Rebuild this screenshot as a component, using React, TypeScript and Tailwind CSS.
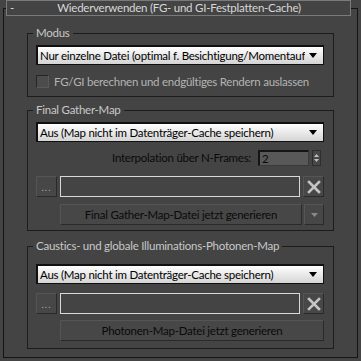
const font = { fontFamily: 'Lato, "Noto Sans", sans-serif' };

const txt = "text-[11.5px] tracking-[-0.25px]";

function Group({ label, className, children }: { label: string; className?: string; children: React.ReactNode }) {
  return (
    <div className={`relative ml-[23px] w-[307px] border border-[#1c1c1c] px-[8px] ${className ?? ""}`}>
      <span className={`absolute -top-[9px] left-[5px] bg-[#444444] px-[3px] ${txt} leading-[16px] whitespace-nowrap text-[#c8c8c8]`}>
        {label}
      </span>
      {children}
    </div>
  );
}

function Dropdown({ text }: { text: string }) {
  return (
    <div className="flex h-[20px] w-[288px] items-center border border-[#101010] border-t-2 border-l-2 bg-gradient-to-b from-[#ffffff] to-[#d4d4d4] pl-[2px] pr-[6px]">
      <span className={`flex-1 overflow-hidden whitespace-nowrap ${txt} leading-[16px] text-black`}>{text}</span>
      <svg width="8" height="5" viewBox="0 0 8 5" className="ml-[4px] shrink-0">
        <path d="M0 0H8L4 5Z" fill="#000" />
      </svg>
    </div>
  );
}

function FileRow() {
  return (
    <div className="flex h-[21px] items-stretch gap-[3px]">
      <button className="flex w-[21px] items-center justify-center border border-[#2a2a2a] border-t-[#555] border-l-[#555] bg-[#474747]">
        <span className="text-[10px] leading-[10px] tracking-[1px] text-[#9ab]">...</span>
      </button>
      <div className="w-[240px] border border-[#d8d8d8] bg-[#444444]" />
      <button className="flex w-[21px] items-center justify-center border border-[#2a2a2a] border-t-[#555] border-l-[#555] bg-[#474747]">
        <svg width="14" height="14" viewBox="0 0 14 14">
          <path d="M2 2L12 12M12 2L2 12" stroke="#c4c4c4" strokeWidth="2.6" strokeLinecap="square" />
        </svg>
      </button>
    </div>
  );
}

function GenButton({ text, className }: { text: string; className?: string }) {
  return (
    <button
      className={`flex h-[21px] items-center justify-center border border-[#2a2a2a] border-t-[#555] border-l-[#555] bg-[#474747] ${txt} leading-[16px] whitespace-nowrap text-[#0a0a0a] ${className ?? ""}`}
    >
      {text}
    </button>
  );
}

export default function App() {
  return (
    <div className="h-[361px] w-[361px] overflow-hidden bg-[#444444] pt-[8px]" style={font}>
      <div className="ml-[3px] h-[350px] w-[355px] border border-[#141414]">
        <div className={`-mt-[9px] ml-[2px] flex h-[16px] w-[345px] items-center border border-[#7a7a7a] bg-[#444444] ${txt} leading-[14px] text-[#d8d8d8]`}>
          <span className="ml-[3px] w-[8px]">-</span>
          <span className="flex-1 text-center pr-[10px] whitespace-nowrap">Wiederverwenden (FG- und GI-Festplatten-Cache)</span>
        </div>

        <Group label="Modus" className="mt-[17px] pt-[11px] pb-[8px]">
          <Dropdown text="Nur einzelne Datei (optimal f. Besichtigung/Momentaufnahmen)" />
          <div className="mt-[10px] flex h-[13px] items-center gap-[5px]">
            <div className="h-[13px] w-[13px] border border-[#262626] border-r-[#5a5a5a] border-b-[#5a5a5a] bg-[#4c4c4c]" />
            <span className={`whitespace-nowrap ${txt} leading-[13px] text-[#b4b4b4]`}>FG/GI berechnen und endgültiges Rendern auslassen</span>
          </div>
        </Group>

        <Group label="Final Gather-Map" className="mt-[13px] pt-[11px] pb-[5px]">
          <Dropdown text="Aus (Map nicht im Datenträger-Cache speichern)" />
          <div className="mt-[8px] flex h-[16px] items-center justify-end">
            <span className={`mr-[7px] whitespace-nowrap ${txt} leading-[16px] text-[#0a0a0a]`}>Interpolation über N-Frames:</span>
            <div className={`flex h-[16px] w-[51px] items-center border border-[#3a3a3a] border-t-2 border-l-2 border-t-[#151515] border-l-[#151515] bg-[#585858] pl-[2px] ${txt} leading-[14px] text-[#0a0a0a]`}>
              2
            </div>
            <div className="ml-[3px] mr-[4px] flex h-[16px] w-[9px] flex-col items-center justify-center gap-[2px] border border-[#2e2e2e] bg-[#474747]">
              <svg width="5" height="3" viewBox="0 0 5 3"><path d="M0 3H5L2.5 0Z" fill="#c0c0c0" /></svg>
              <svg width="5" height="3" viewBox="0 0 5 3"><path d="M0 0H5L2.5 3Z" fill="#c0c0c0" /></svg>
            </div>
          </div>
          <div className="mt-[10px]">
            <FileRow />
          </div>
          <div className="mt-[7px] flex gap-[2px] pl-[24px]">
            <GenButton text="Final Gather-Map-Datei jetzt generieren" className="w-[242px]" />
            <button className="flex h-[21px] w-[20px] items-center justify-center border border-[#2a2a2a] border-t-[#555] border-l-[#555] bg-[#474747]">
              <svg width="7" height="4" viewBox="0 0 7 4"><path d="M0 0H7L3.5 4Z" fill="#8a8a8a" /></svg>
            </button>
          </div>
        </Group>

        <Group label="Caustics- und globale Illuminations-Photonen-Map" className="mt-[15px] pt-[17px] pb-[7px]">
          <Dropdown text="Aus (Map nicht im Datenträger-Cache speichern)" />
          <div className="mt-[9px]">
            <FileRow />
          </div>
          <div className="mt-[6px] pl-[24px]">
            <GenButton text="Photonen-Map-Datei jetzt generieren" className="w-[264px]" />
          </div>
        </Group>
      </div>
    </div>
  );
}
